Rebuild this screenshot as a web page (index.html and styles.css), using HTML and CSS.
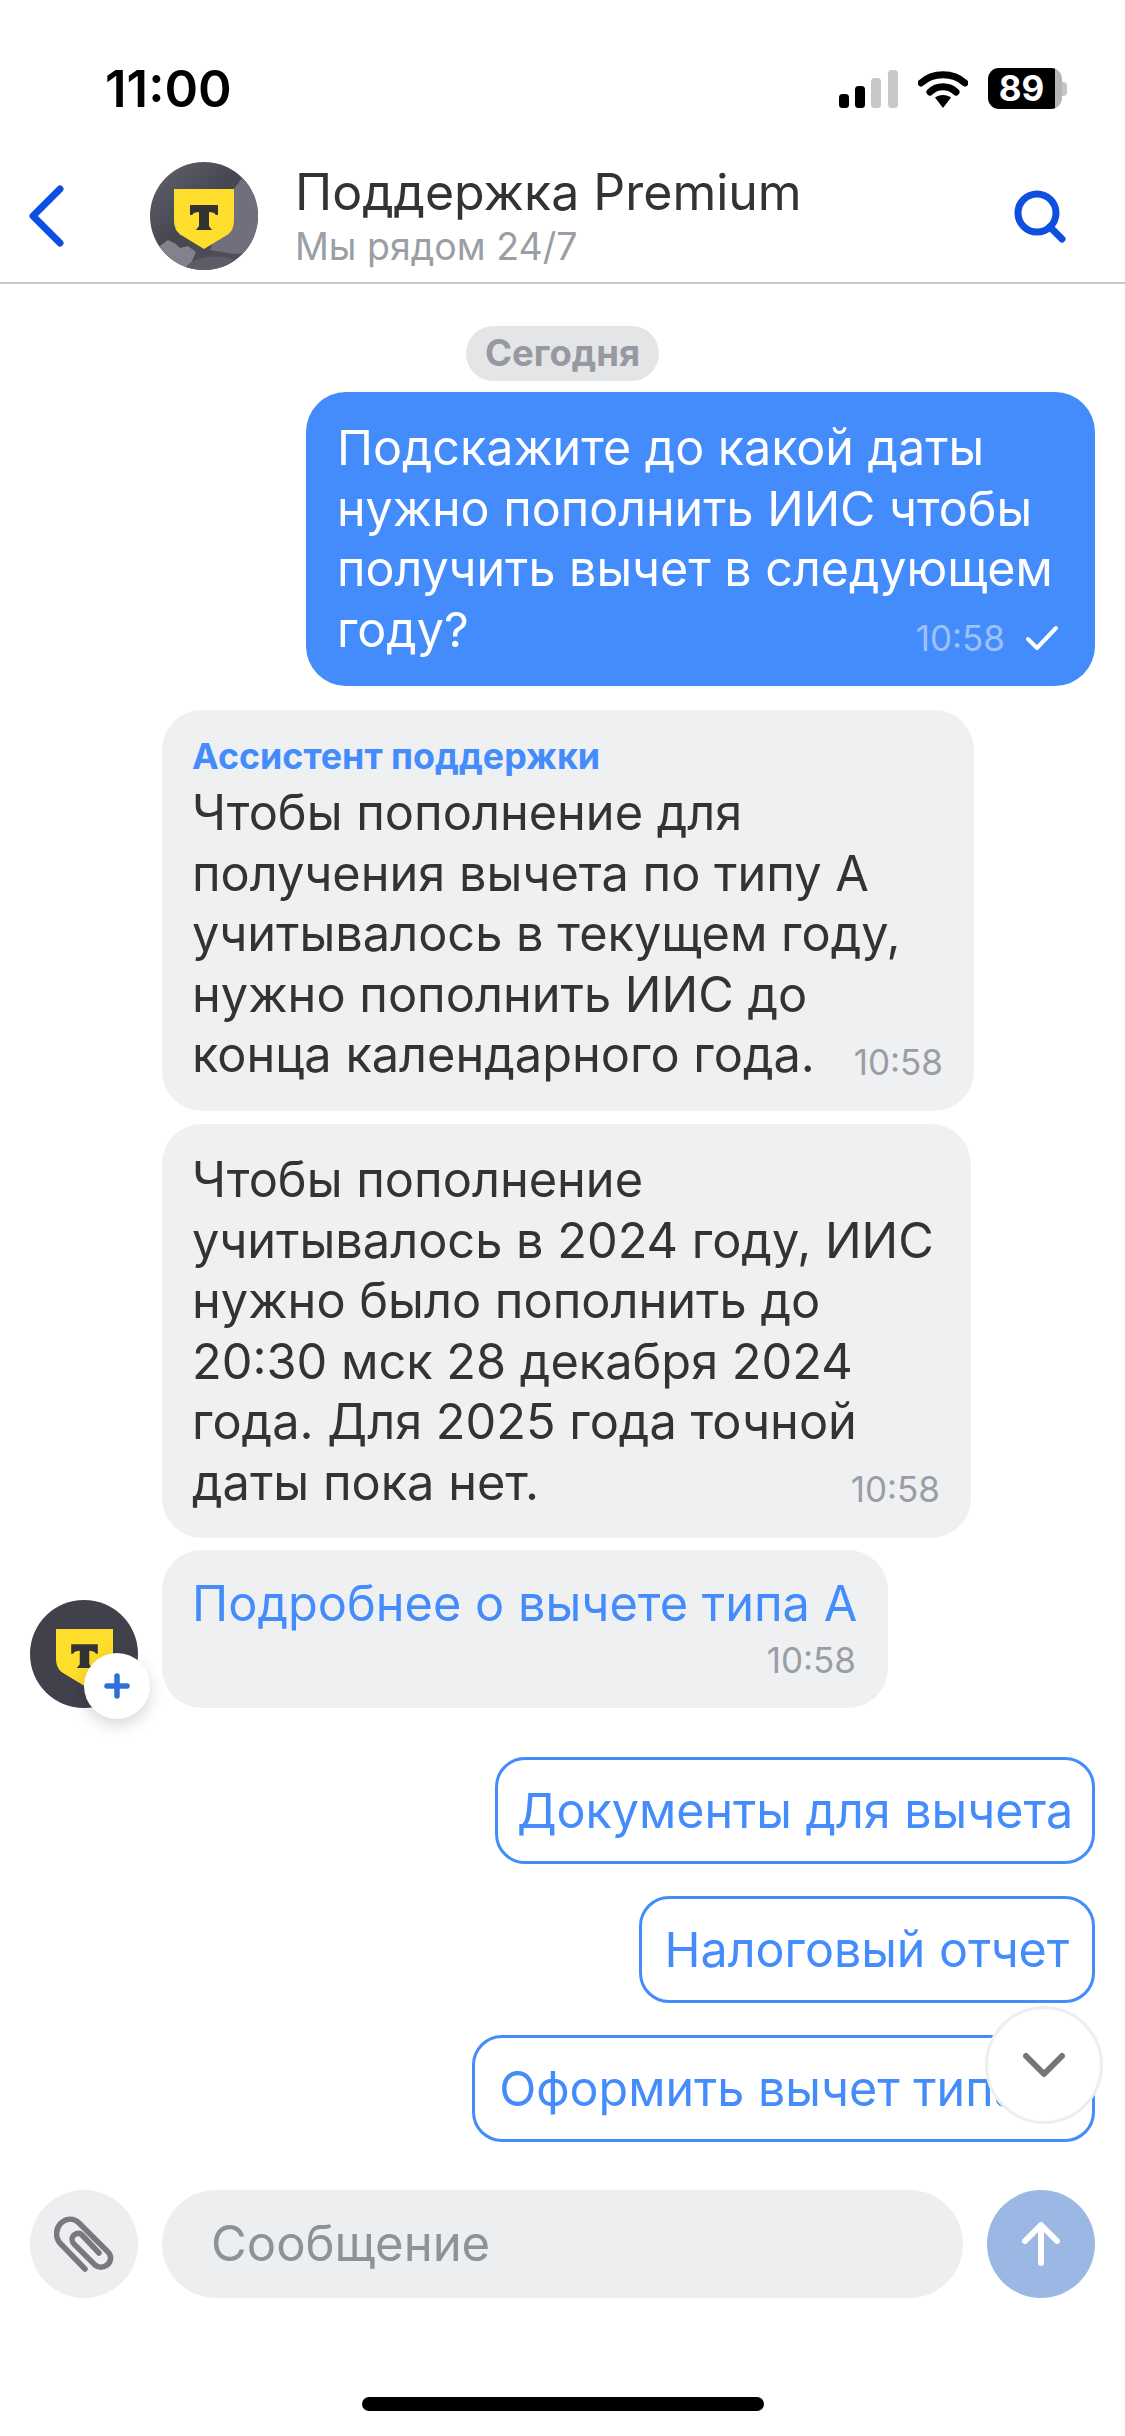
FILE: index.html
```html
<!DOCTYPE html>
<html lang="ru">

<head>
    <meta charset="UTF-8">
    <title>Поддержка Premium</title>

    <link rel="stylesheet" href="styles.css">
</head>

<body>
    <div class="phone">
        <div class="status">
            <span class="clock">11:00</span>
            <div class="status-icons">
                <svg class="signal" width="59" height="38" viewBox="0 0 59 38">
                    <rect x="0" y="24" width="10" height="14" rx="3.500" fill="#000"/>
                    <rect x="16" y="16" width="10" height="22" rx="3.500" fill="#000"/>
                    <rect x="32" y="8" width="10" height="30" rx="3.500" fill="#c8c8c8"/>
                    <rect x="49" y="0" width="10" height="38" rx="3.500" fill="#c8c8c8"/>
                </svg>
                <svg class="wifi" width="50" height="38" viewBox="0 0 50 38">
                    <path d="M3 13C15 2 35 2 47 13" fill="none" stroke="#000" stroke-width="7" stroke-linecap="round"/>
                    <path d="M12 22C19 15 31 15 38 22" fill="none" stroke="#000" stroke-width="7" stroke-linecap="round"/>
                    <path d="M17 27.500C21 24 29 24 33 27.500L25 38Z" fill="#000"/>
                </svg>
                <div class="battery">89</div>
                <span class="battery-cap"></span>
            </div>
        </div>

        <header class="topbar">
            <svg class="back" width="38" height="62" viewBox="0 0 38 62">
                <path d="M31 4L4 31L31 58" fill="none" stroke="#0f4fe0" stroke-width="7" stroke-linecap="round" stroke-linejoin="round"/>
            </svg>
            <svg class="avatar-big" width="108" height="108" viewBox="0 0 108 108">
                <defs>
                    <linearGradient id="avatarBase" x1="0" y1="0" x2="1" y2="1">
                        <stop offset="0" stop-color="#63636e"/>
                        <stop offset="0.45" stop-color="#474751"/>
                        <stop offset="1" stop-color="#53535d"/>
                    </linearGradient>
                    <clipPath id="avatarClip"><circle cx="54" cy="54" r="54"/></clipPath>
                </defs>
                <g clip-path="url(#avatarClip)">
                    <rect width="108" height="108" fill="url(#avatarBase)"/>
                    <path d="M84 27L95 12L108 20V90L84 92L60 88Z" fill="#70707c"/>
                    <path d="M0 88L10 84L18 78L26 82L30 86L38 84L46 90L38 108H0Z" fill="#82828c"/>
                    <path d="M34 108C40 94 70 90 90 100L76 108Z" fill="#5c5c66"/>
                    <g transform="translate(24 27)">
                        <path d="M0 0H60V31C60 40 56 44 53 46L30 60L7 46C4 44 0 40 0 31Z" fill="#ffdd2d"/>
                        <path d="M16 16H44V26H42C41 24 38 23 35 23V37L38 41H22L25 37V23C22 23 19 24 18 26H16Z" fill="#333"/>
                    </g>
                </g>
            </svg>
            <div class="topbar-text">
                <div class="topbar-title">Поддержка Premium</div>
                <div class="topbar-sub">Мы рядом 24/7</div>
            </div>
            <svg class="search" width="54" height="54" viewBox="0 0 54 54">
                <circle cx="24" cy="24" r="19" fill="none" stroke="#0f4fe0" stroke-width="7"/>
                <path d="M37 38L49 50" stroke="#0f4fe0" stroke-width="7" stroke-linecap="round"/>
            </svg>
        </header>

        <main class="chat">
            <div class="day"><span>Сегодня</span></div>

            <div class="bubble bubble-out">
                Подскажите до какой даты<br>нужно пополнить ИИС чтобы<br>получить вычет в следующем<br>году?
                <span class="meta">10:58
                    <svg width="34" height="26" viewBox="0 0 34 26"><path d="M3 14L12 23L31 3" fill="none" stroke="#fff" stroke-width="4" stroke-linecap="round" stroke-linejoin="round"/></svg>
                </span>
            </div>

            <div class="bubble bubble-in first">
                <div class="sender">Ассистент поддержки</div>
                Чтобы пополнение для<br>получения вычета по типу А<br>учитывалось в текущем году,<br>нужно пополнить ИИС до<br>конца календарного года.
                <span class="meta">10:58</span>
            </div>

            <div class="bubble bubble-in second">
                Чтобы пополнение<br>учитывалось в 2024 году, ИИС<br>нужно было пополнить до<br>20:30 мск 28 декабря 2024<br>года. Для 2025 года точной<br>даты пока нет.
                <span class="meta">10:58</span>
            </div>

            <div class="last-row">
                <div class="avatar-small">
                    <svg width="57" height="57" viewBox="0 0 60 60">
                        <path d="M0 0H60V31C60 40 56 44 53 46L30 60L7 46C4 44 0 40 0 31Z" fill="#ffdd2d"/>
                        <path d="M16 16H44V26H42C41 24 38 23 35 23V37L38 41H22L25 37V23C22 23 19 24 18 26H16Z" fill="#333"/>
                    </svg>
                    <span class="plus">
                        <svg width="26" height="26" viewBox="0 0 26 26"><path d="M13 3V23M3 13H23" stroke="#2f6fd6" stroke-width="5.500" stroke-linecap="round"/></svg>
                    </span>
                </div>
                <div class="bubble bubble-in third">
                    <a class="link">Подробнее о вычете типа А</a>
                    <span class="meta">10:58</span>
                </div>
            </div>

            <div class="replies">
                <button class="reply reply-docs">Документы для вычета</button>
                <button class="reply reply-tax">Налоговый отчет</button>
                <button class="reply reply-apply">Оформить вычет типа А</button>
                <span class="scroll-down">
                    <svg width="42" height="26" viewBox="0 0 42 26"><path d="M3 4L21 22L39 4" fill="none" stroke="#757679" stroke-width="6" stroke-linecap="round" stroke-linejoin="round"/></svg>
                </span>
            </div>
        </main>

        <footer class="composer">
            <span class="round attach">
                <svg width="60" height="56" viewBox="0 0 60 56">
                    <path d="M31 53L5 26C1 20 2 12 7 7C13 2 20 2 25 7L54 36C58 40 57 46 53 49C49 52 45 52 41 49L20 28C17 25 18 21 20 19C23 17 26 17 28 19L45 37" fill="none" stroke="#77797c" stroke-width="5.500" stroke-linecap="round" stroke-linejoin="round"/>
                </svg>
            </span>
            <div class="field">Сообщение</div>
            <span class="round send">
                <svg width="38" height="44" viewBox="0 0 38 44"><path d="M19 41V4M3 19L19 3L35 19" fill="none" stroke="#fff" stroke-width="6" stroke-linecap="round" stroke-linejoin="round"/></svg>
            </span>
        </footer>

        <div class="home-bar"></div>
    </div>
</body>

</html>
```

FILE: styles.css
```css
* {
    margin: 0;
    padding: 0;
    box-sizing: border-box;
}

body {
    background: #fff;
    font-family: Inter, "Liberation Sans", sans-serif;
    color: #333;
}

.phone {
    width: 1125px;
    height: 2436px;
    overflow: hidden;
    display: flex;
    flex-direction: column;
}

/* status bar */
.status {
    height: 162px;
    padding: 62px 58px 0 105px;
    display: flex;
    justify-content: space-between;
    align-items: flex-start;
}

.clock {
    font-size: 51px;
    line-height: 54px;
    font-weight: 600;
    color: #000;
}

.status-icons {
    display: flex;
    align-items: center;
    margin-top: 6px;
}

.signal {
    margin-right: 20px;
}

.wifi {
    margin-right: 20px;
}

.battery {
    width: 74px;
    height: 41px;
    padding-right: 7px;
    background: linear-gradient(to right, #000 67px, #b5b5b5 67px);
    border-radius: 11px;
    color: #fff;
    font-size: 35px;
    font-weight: 700;
    line-height: 41px;
    text-align: center;
}

.battery-cap {
    width: 5px;
    height: 14px;
    background: #c4c4c4;
    border-radius: 0 4px 4px 0;
}

/* header */
.topbar {
    height: 122px;
    padding: 0 58px 13px 29px;
    border-bottom: 2px solid #c8c8c8;
    display: flex;
    align-items: center;
}

.back {
    margin-right: 83px;
    flex: none;
}

.avatar-big {
    flex: none;
}

.topbar-text {
    margin-left: 37px;
    flex: 1;
}

.topbar-title {
    font-size: 50px;
    line-height: 60px;
}

.topbar-sub {
    font-size: 37.500px;
    line-height: 47px;
    margin-top: 1px;
    color: #9a9ea5;
}

/* messages */
.chat {
    flex: 1;
    padding: 0 30px;
    display: flex;
    flex-direction: column;
}

.day {
    text-align: center;
    padding-top: 42px;
    height: 108px;
}

.day span {
    display: inline-block;
    height: 55px;
    line-height: 55px;
    padding: 0 19px;
    background: #e4e5e7;
    border-radius: 28px;
    color: #96999f;
    font-size: 36.500px;
    font-weight: 700;
}

.bubble {
    position: relative;
    font-size: 48.700px;
    line-height: 60.600px;
    border-radius: 40px;
}

.bubble-out {
    align-self: flex-end;
    width: 789px;
    height: 294px;
    padding: 26px 20px 0 31px;
    background: #448cfb;
    color: #fff;
    font-size: 48.400px;
}

.bubble-out .meta {
    color: #9cc2fb;
    right: 36px;
    bottom: 28px;
    display: flex;
    align-items: center;
    gap: 20px;
}

.bubble-in {
    background: #eff0f2;
    padding: 0 20px 0 30px;
    margin-left: 132px;
}

.meta {
    position: absolute;
    right: 31px;
    bottom: 29px;
    font-size: 35px;
    line-height: 40px;
    color: #9a9da3;
}

.first {
    width: 812px;
    height: 401px;
    margin-top: 24px;
    padding-top: 19px;
}

.sender {
    font-size: 35.800px;
    font-weight: 700;
    line-height: 54px;
    color: #448cfb;
}

.second {
    width: 809px;
    height: 414px;
    margin-top: 13px;
    padding-top: 26px;
}

.last-row {
    margin-top: 12px;
    display: flex;
    align-items: flex-end;
}

.avatar-small {
    position: relative;
    width: 108px;
    height: 108px;
    background: #41414b;
    border-radius: 50%;
    margin-right: 24px;
    flex: none;
    display: flex;
    align-items: center;
    justify-content: center;
    padding-top: 6px;
}

.plus {
    position: absolute;
    left: 54px;
    top: 53px;
    width: 66px;
    height: 66px;
    border-radius: 50%;
    background: #fff;
    box-shadow: 0 6px 16px rgba(0, 0, 0, 0.16);
    display: flex;
    align-items: center;
    justify-content: center;
}

.third {
    margin-left: 0;
    width: 726px;
    height: 158px;
    padding-top: 24px;
}

.link {
    color: #448cfb;
}

.third .meta {
    right: 32px;
    bottom: 28px;
}

.replies {
    position: relative;
    margin-top: 49px;
    display: flex;
    flex-direction: column;
    align-items: flex-end;
    gap: 32px;
}

.reply {
    display: block;
    height: 107px;
    border: 3px solid #448cfb;
    border-radius: 30px;
    background: #fff;
    color: #448cfb;
    font: inherit;
    font-size: 48.400px;
    white-space: nowrap;
}

.reply-docs {
    width: 600px;
}

.reply-tax {
    width: 456px;
}

.reply-apply {
    width: 623px;
}

.scroll-down {
    position: absolute;
    right: -8px;
    bottom: 18px;
    width: 118px;
    height: 118px;
    border-radius: 50%;
    border: 3px solid #eeeeee;
    background: #fff;
    display: flex;
    align-items: center;
    justify-content: center;
}

/* input */
.composer {
    height: 207px;
    padding: 0 30px 60px;
    display: flex;
    align-items: flex-start;
    gap: 24px;
}

.round {
    width: 108px;
    height: 108px;
    border-radius: 50%;
    flex: none;
    display: flex;
    align-items: center;
    justify-content: center;
}

.attach {
    background: #eceef0;
}

.send {
    background: #9ab8e3;
}

.field {
    flex: 1;
    height: 108px;
    line-height: 108px;
    padding-left: 49px;
    border-radius: 54px;
    background: #eceef0;
    color: #8d9198;
    font-size: 49px;
}

.home-bar {
    width: 402px;
    height: 14px;
    margin: 0 auto 25px;
    background: #000;
    border-radius: 7px;
}
```
